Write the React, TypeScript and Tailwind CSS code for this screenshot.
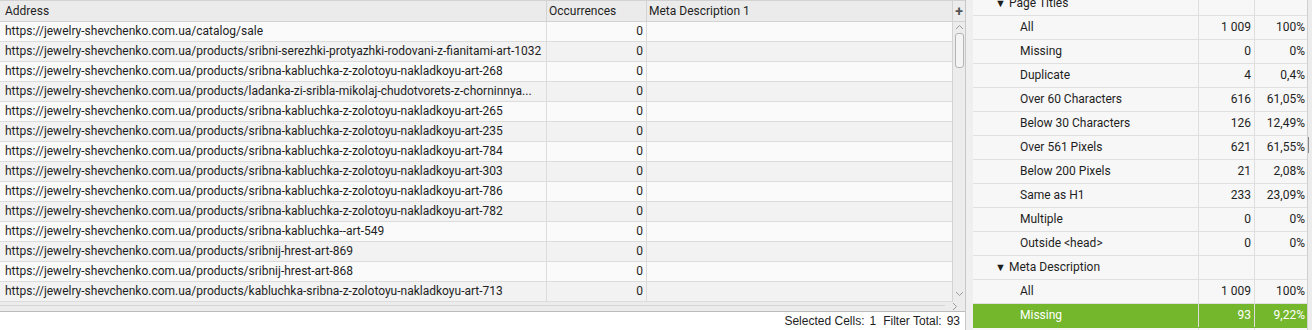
const urls = [
  'https://jewelry-shevchenko.com.ua/catalog/sale',
  'https://jewelry-shevchenko.com.ua/products/sribni-serezhki-protyazhki-rodovani-z-fianitami-art-1032',
  'https://jewelry-shevchenko.com.ua/products/sribna-kabluchka-z-zolotoyu-nakladkoyu-art-268',
  'https://jewelry-shevchenko.com.ua/products/ladanka-zi-sribla-mikolaj-chudotvorets-z-chorninnya...',
  'https://jewelry-shevchenko.com.ua/products/sribna-kabluchka-z-zolotoyu-nakladkoyu-art-265',
  'https://jewelry-shevchenko.com.ua/products/sribna-kabluchka-z-zolotoyu-nakladkoyu-art-235',
  'https://jewelry-shevchenko.com.ua/products/sribna-kabluchka-z-zolotoyu-nakladkoyu-art-784',
  'https://jewelry-shevchenko.com.ua/products/sribna-kabluchka-z-zolotoyu-nakladkoyu-art-303',
  'https://jewelry-shevchenko.com.ua/products/sribna-kabluchka-z-zolotoyu-nakladkoyu-art-786',
  'https://jewelry-shevchenko.com.ua/products/sribna-kabluchka-z-zolotoyu-nakladkoyu-art-782',
  'https://jewelry-shevchenko.com.ua/products/sribna-kabluchka--art-549',
  'https://jewelry-shevchenko.com.ua/products/sribnij-hrest-art-869',
  'https://jewelry-shevchenko.com.ua/products/sribnij-hrest-art-868',
  'https://jewelry-shevchenko.com.ua/products/kabluchka-sribna-z-zolotoyu-nakladkoyu-art-713',
];

type Stat = { label: string; count?: string; pct?: string; group?: boolean; selected?: boolean };

const stats: Stat[] = [
  { label: 'Page Titles', group: true },
  { label: 'All', count: '1 009', pct: '100%' },
  { label: 'Missing', count: '0', pct: '0%' },
  { label: 'Duplicate', count: '4', pct: '0,4%' },
  { label: 'Over 60 Characters', count: '616', pct: '61,05%' },
  { label: 'Below 30 Characters', count: '126', pct: '12,49%' },
  { label: 'Over 561 Pixels', count: '621', pct: '61,55%' },
  { label: 'Below 200 Pixels', count: '21', pct: '2,08%' },
  { label: 'Same as H1', count: '233', pct: '23,09%' },
  { label: 'Multiple', count: '0', pct: '0%' },
  { label: 'Outside <head>', count: '0', pct: '0%' },
  { label: 'Meta Description', group: true },
  { label: 'All', count: '1 009', pct: '100%' },
  { label: 'Missing', count: '93', pct: '9,22%', selected: true },
  { label: '' },
];

function Chevron({ d }: { d: string }) {
  return (
    <svg width="9" height="6" viewBox="0 0 9 6" className="block">
      <path d={d} fill="none" stroke="#9a9a9a" strokeWidth="1" />
    </svg>
  );
}

function UrlTable() {
  return (
    <div className="flex w-[966px] flex-col border-r border-[#c8c8c8] bg-white">
      <div className="flex h-[302px]">
        <div className="flex w-[953px] flex-col">
          <div className="flex h-[22px] border-y border-[#d2d2d2] bg-[#ebebeb] text-[12px] leading-[20px] text-[#1e1e1e]">
            <div className="w-[547px] border-r border-[#d2d2d2] pl-[5px]">Address</div>
            <div className="w-[100px] border-r border-[#d2d2d2] pl-[2px]">Occurrences</div>
            <div className="flex-1 pl-[2px]">Meta Description 1</div>
          </div>
          {urls.map((u, i) => (
            <div
              key={i}
              className={`flex h-[20px] shrink-0 border-b border-[#dcdcdc] text-[12px] leading-[19px] text-[#1e1e1e] ${
                i % 2 === 0 ? 'bg-[#fafafa]' : 'bg-[#f2f2f2]'
              }`}
            >
              <div className="w-[547px] overflow-hidden whitespace-nowrap border-r border-[#dcdcdc] pl-[5px]">{u}</div>
              <div className="w-[100px] border-r border-[#dcdcdc] pr-[3px] text-right">0</div>
              <div className="flex-1" />
            </div>
          ))}
        </div>
        <div className="flex w-[13px] flex-col border-l border-[#d2d2d2] bg-[#ececec]">
          <div className="flex h-[22px] items-center justify-center border-y border-[#d2d2d2] text-[14px] font-bold leading-none text-[#555]">
            +
          </div>
          <div className="flex h-[9px] items-center justify-center">
            <Chevron d="M1 5 L4.5 1.5 L8 5" />
          </div>
          <div className="mx-auto mt-[2px] h-[35px] w-[9px] rounded-[3px] border border-[#b4b4b4] bg-[#f4f4f4]" />
          <div className="flex-1" />
          <div className="mb-[4px] flex h-[9px] items-center justify-center">
            <Chevron d="M1 1 L4.5 4.5 L8 1" />
          </div>
        </div>
      </div>
      <div className="flex h-[12px] border-b border-[#bcbcbc] bg-[#ececec]">
        <div className="mt-[3px] h-[5px] flex-1 border-t border-[#d4d4d4]" />
        <div className="flex w-[20px] items-center justify-center">
          <svg width="6" height="9" viewBox="0 0 6 9">
            <path d="M1 1 L4.5 4.5 L1 8" fill="none" stroke="#9a9a9a" strokeWidth="1" />
          </svg>
        </div>
      </div>
      <div className="flex flex-1 items-center justify-end gap-[5px] pr-[5px] font-['Liberation_Sans',sans-serif] text-[12px] text-[#1e1e1e]">
        <span>Selected Cells:</span>
        <span>1</span>
        <span className="ml-[2px]">Filter Total:</span>
        <span>93</span>
      </div>
    </div>
  );
}

function Overview() {
  return (
    <div className="flex flex-1 overflow-hidden">
      <div className="mt-[-8px] flex flex-1 flex-col">
        {stats.map((s, i) => (
          <div
            key={i}
            className={`flex h-[24px] shrink-0 border-b text-[12px] leading-[23px] ${
              s.selected
                ? 'border-[#74b72d] bg-[#74b72d] text-white'
                : 'border-[#e0e0e0] bg-[#f7f7f7] text-[#1e1e1e]'
            }`}
          >
            <div className="flex w-[226px] items-center border-r border-[#dedede]">
              {s.group ? (
                <>
                  <span className="ml-[22px] w-[14px] text-[11px] leading-none">▼</span>
                  <span>{s.label}</span>
                </>
              ) : (
                <span className="pl-[47px]">{s.label}</span>
              )}
            </div>
            <div className="w-[56px] border-r border-[#dedede] pr-[3px] text-right">{s.count}</div>
            <div className="w-[52px] pr-[2px] text-right">{s.pct}</div>
          </div>
        ))}
      </div>
      <div className="w-[5px] border-l border-[#d0d0d0] bg-[#ececec] pt-[137px]">
        <div className="h-[16px] border-l border-[#8c8c8c]" />
      </div>
    </div>
  );
}

export default function App() {
  return (
    <div className="flex h-[330px] w-[1312px] overflow-hidden bg-[#f0f0f0] font-['Roboto',sans-serif]">
      <UrlTable />
      <div className="w-[7px] bg-[#efefef]" />
      <Overview />
    </div>
  );
}
